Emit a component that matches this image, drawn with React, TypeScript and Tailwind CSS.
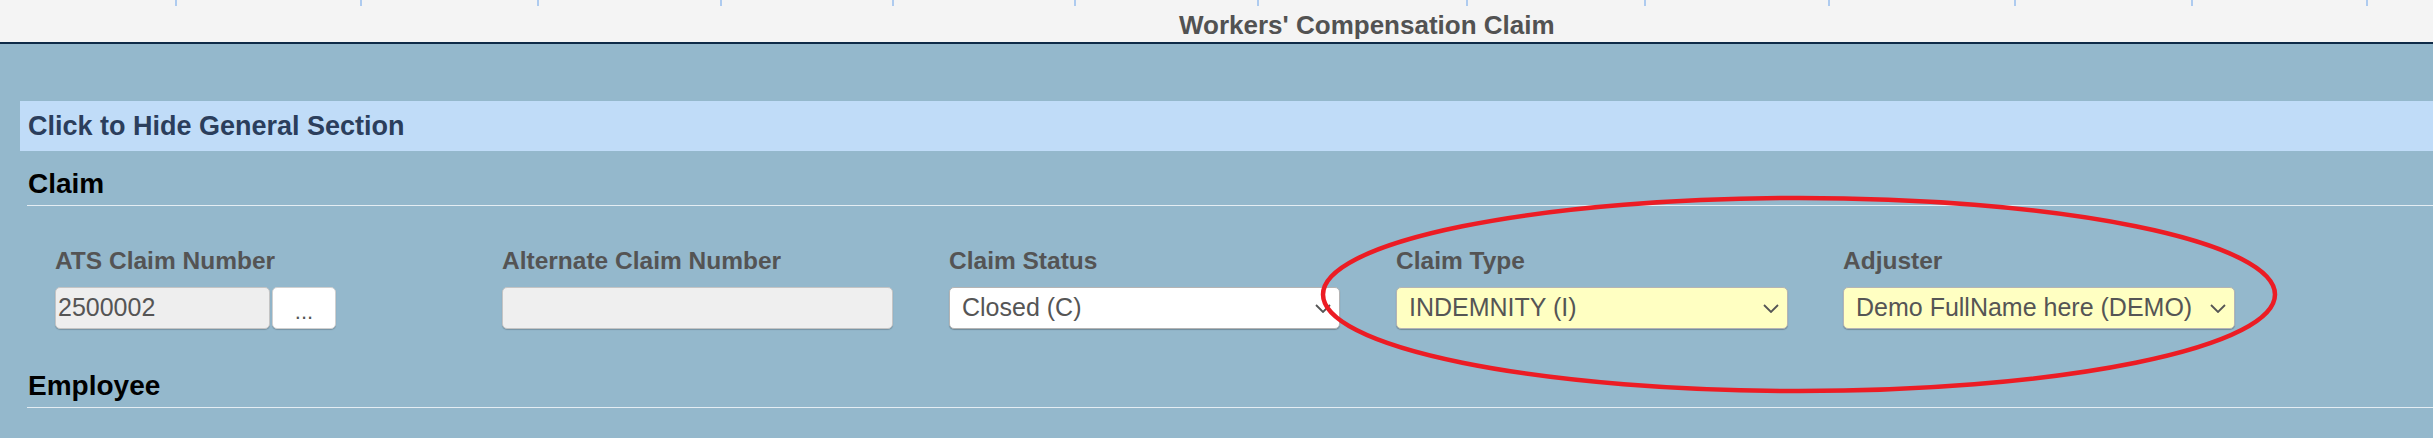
import React from 'react'

const tickCells = [
  'w-[177px]', 'w-[185px]', 'w-[177px]', 'w-[183px]', 'w-[172px]', 'w-[182px]', 'w-[183px]',
  'w-[209px]', 'w-[178px]', 'w-[184px]', 'w-[186px]', 'w-[177px]', 'w-[175px]',
]

function Chevron() {
  return (
    <svg width="16" height="9" viewBox="0 0 16 9" className="shrink-0">
      <polyline points="1,1 8,8 15,1" fill="none" stroke="#555" strokeWidth="1.8" />
    </svg>
  )
}

function Select({ value, yellow }: { value: string; yellow?: boolean }) {
  return (
    <div
      className={`flex h-[42px] items-center justify-between rounded-[5px] border border-[#b4b4b4] pl-[12px] pr-[8px] text-[25px] text-[#555] shadow-[0_1px_1px_rgba(0,0,0,0.25)] ${
        yellow ? 'bg-[#ffffc2]' : 'bg-white'
      }`}
    >
      <span>{value}</span>
      <Chevron />
    </div>
  )
}

function Field({ label, children }: { label: string; children: React.ReactNode }) {
  return (
    <div className="flex flex-col">
      <label className="mb-[14px] text-[24.5px] leading-[24px] font-bold text-[#545454]">{label}</label>
      {children}
    </div>
  )
}

export default function App() {
  return (
    <div className="relative h-[438px] w-[2433px] overflow-hidden bg-[#94b8cc] font-['Liberation_Sans',Arial,sans-serif]">
      <header className="h-[44px] border-b-2 border-[#0e2a47] bg-[#f4f4f4]">
        <div className="flex h-[6px]">
          {tickCells.map((w, i) => (
            <div key={i} className={`${w} h-[6px] border-r-2 border-[#aecbef]`} />
          ))}
        </div>
        <h1 className="mt-[6px] pl-[1179px] text-[26px] leading-[26px] font-bold text-[#525252]">
          Workers' Compensation Claim
        </h1>
      </header>

      <div className="ml-[20px] mt-[57px] h-[50px] bg-[#c0dcf8] pl-[8px] text-[27px] leading-[50px] font-bold text-[#2b3e5c]">
        Click to Hide General Section
      </div>

      <h2 className="ml-[27px] mt-[19px] border-b border-[#e4edf3] pb-[7px] pl-[1px] text-[28px] leading-[28px] font-bold text-black">
        Claim
      </h2>

      <div className="ml-[55px] mt-[43px] grid grid-cols-[repeat(5,392px)] gap-x-[55px]">
        <Field label="ATS Claim Number">
          <div className="flex gap-[2px]">
            <div className="flex h-[42px] w-[215px] items-center rounded-[5px] border border-[#c4c4c4] bg-[#eeeeee] pl-[2px] text-[25px] text-[#555] shadow-[0_1px_1px_rgba(0,0,0,0.2)]">
              2500002
            </div>
            <button className="flex h-[42px] w-[64px] items-center justify-center rounded-[5px] border border-[#d0d0d0] bg-white pt-[6px] text-[22px] text-[#555] shadow-[0_1px_1px_rgba(0,0,0,0.2)]">
              ...
            </button>
          </div>
        </Field>
        <Field label="Alternate Claim Number">
          <div className="h-[42px] w-[391px] rounded-[5px] border border-[#c4c4c4] bg-[#efefef] shadow-[0_1px_1px_rgba(0,0,0,0.2)]" />
        </Field>
        <Field label="Claim Status">
          <div className="w-[391px]">
            <Select value="Closed (C)" />
          </div>
        </Field>
        <Field label="Claim Type">
          <Select value="INDEMNITY (I)" yellow />
        </Field>
        <Field label="Adjuster">
          <Select value="Demo FullName here (DEMO)" yellow />
        </Field>
      </div>

      <h2 className="ml-[27px] mt-[43px] border-b border-[#e4edf3] pb-[7px] pl-[1px] text-[28px] leading-[28px] font-bold text-black">
        Employee
      </h2>

      <svg
        className="pointer-events-none absolute left-[1318px] top-[193px]"
        width="962"
        height="203"
        viewBox="0 0 962 203"
      >
        <ellipse cx="481" cy="101.5" rx="476" ry="96.5" fill="none" stroke="#ec1c24" strokeWidth="4.5" />
      </svg>
    </div>
  )
}
